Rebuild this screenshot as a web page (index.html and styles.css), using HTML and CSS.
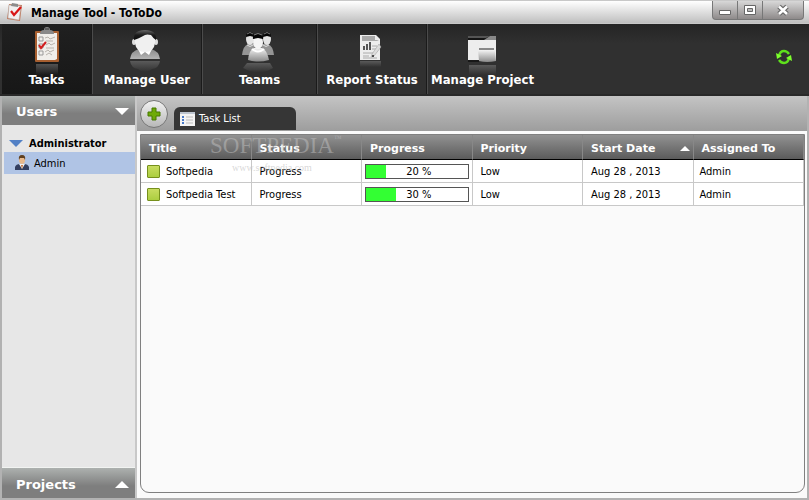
FILE: index.html
```html
<!DOCTYPE html>
<html lang="en">
  <head>
    <meta charset="UTF-8" />
    <meta name="viewport" content="width=device-width, initial-scale=1" />
    <title>Manage Tool - ToToDo</title>
    <link rel="stylesheet" href="styles.css">
  </head>
  <body>
    <div class="window">
      <header class="titlebar">
        <svg class="app-icon" viewBox="0 0 18 20">
          <path d="M3 2L16 3L14 19L1 17Z" fill="#c47a5c" />
          <path d="M3 3L15 4L13 18L2 16Z" fill="#f1efef" stroke="#aaa" stroke-width=".5" />
          <path d="M6 1L12 2V5L5 4Z" fill="#8c8c8c" />
          <path d="M5 9L8 13L15 5" fill="none" stroke="#d91616" stroke-width="2.2" />
        </svg>
        <h1>Manage Tool - ToToDo</h1>
        <div class="window-buttons">
          <button aria-label="Minimize">
            <svg width="14" height="14" viewBox="0 0 14 14"><path d="M1.500 7.500H12.500V11.500H1.500Z" fill="#fff" stroke="#666" /></svg>
          </button>
          <button aria-label="Maximize">
            <svg width="14" height="14" viewBox="0 0 14 14"><path d="M1.500 2.500H12.500V11.500H1.500Z" fill="#fff" stroke="#666" /><path d="M4.500 5.500H9.500V8.500H4.500Z" fill="#bbb" stroke="#666" /></svg>
          </button>
          <button class="close" aria-label="Close">
            <svg width="14" height="14" viewBox="0 0 14 14"><path d="M3 3.500L11 11M11 3.500L3 11" stroke="#666" stroke-width="5" /><path d="M3 3.500L11 11M11 3.500L3 11" stroke="#fff" stroke-width="2.600" /></svg>
          </button>
        </div>
      </header>

      <nav class="toolbar">
        <button class="tool tool-tasks active">
          <svg viewBox="0 0 36 48">
            <defs>
              <linearGradient id="fade" x1="0" y1="0" x2="0" y2="1">
                <stop offset="0" stop-color="#777" stop-opacity=".6" />
                <stop offset="1" stop-color="#777" stop-opacity="0" />
              </linearGradient>
              <linearGradient id="silver" x1="0" y1="0" x2="0" y2="1">
                <stop offset="0" stop-color="#f4f4f4" />
                <stop offset="1" stop-color="#8a8a8a" />
              </linearGradient>
              <linearGradient id="shirt" x1="0" y1="0" x2="0" y2="1">
                <stop offset="0" stop-color="#8a8a8a" />
                <stop offset="1" stop-color="#b4b4b4" />
              </linearGradient>
              <linearGradient id="hair" x1="0" y1="0" x2="0" y2="1">
                <stop offset="0" stop-color="#6a6a6a" />
                <stop offset=".5" stop-color="#1c1c1c" />
                <stop offset="1" stop-color="#0c0c0c" />
              </linearGradient>
            </defs>
            <rect x="6" y="4" width="24" height="31" rx="1" fill="#a75f30" />
            <path d="M8 6H28V32L26 33H8Z" fill="#f0eeea" />
            <path d="M11 7Q11 3 15 3Q15 0 18 0Q21 0 21 3Q25 3 25 7Z" fill="#898989" />
            <path d="M16 2H20" stroke="#333" />
            <path d="M10 10H14V14H10ZM10 17H14V21H10ZM10 24H14V28H10Z" fill="none" stroke="#999" />
            <path d="M16 11L19 10L21 12L26 10M17 14H24M17 18L20 16L22 18L26 16M17 21H25M16 25L19 23L21 25L25 23M17 28L20 26L23 28" fill="none" stroke="#b8b3ac" />
            <path d="M10 18L12 21L17 15" fill="none" stroke="#d12020" stroke-width="2" />
            <rect x="7" y="37" width="22" height="11" fill="url(#fade)" />
          </svg>
          <span>Tasks</span>
        </button>
        <button class="tool">
          <svg viewBox="0 0 36 48">
            <path d="M1 32Q2 24 10 22H22Q30 24 31 32Z" fill="url(#shirt)" />
            <path d="M9 22L12 28L16 25L20 28L23 22Z" fill="#fff" />
            <ellipse cx="5" cy="15" rx="2" ry="3" fill="#ddd" /><ellipse cx="27" cy="15" rx="2" ry="3" fill="#ddd" />
            <path d="M6 11Q7 5 16 5Q25 5 26 11V16Q25 25 16 25Q7 25 6 16Z" fill="#f0f0f0" />
            <path d="M5 13Q4 3 16 3Q28 3 27 13Q24 11 22 8Q18 7 16 8Q9 12 5 13Z" fill="url(#hair)" />
            <path d="M1 34H31Q30 41 23 42Q16 48 9 42Q2 41 1 34Z" fill="url(#fade)" />
          </svg>
          <span>Manage User</span>
        </button>
        <button class="tool tool-teams">
          <svg viewBox="0 0 36 48">
            <path d="M0 28Q1 19 6 17H12L14 28ZM32 28Q31 19 26 17H20L18 28Z" fill="#959595" />
            <path d="M5 18Q8 21 11 18M21 18Q24 21 27 18" fill="none" stroke="#ddd" />
            <ellipse cx="8" cy="12" rx="4" ry="6" fill="#e4e4e4" /><ellipse cx="25" cy="12" rx="4" ry="6" fill="#e4e4e4" />
            <path d="M4 10Q4 5 8 5Q12 5 12 10L8 9ZM21 10Q21 5 25 5Q29 5 29 10L25 9Z" fill="#050505" />
            <path d="M5 7Q8 4 11 7M22 7Q25 4 28 7" fill="none" stroke="#777" />
            <path d="M6 33Q7 23 12 21H20Q25 23 27 33Q16 36 6 33Z" fill="url(#silver)" />
            <path d="M10 22Q16 27 22 22" stroke="#fff" stroke-width="2" fill="none" />
            <ellipse cx="16" cy="15" rx="5" ry="7" fill="#f4f4f4" />
            <path d="M11 12Q10 7 16 7Q22 7 21 12L16 11Z" fill="#050505" />
            <path d="M12 8Q16 5 20 8" fill="none" stroke="#777" />
            <path d="M5 36H28L31 41Q16 50 1 41Z" fill="url(#fade)" />
          </svg>
          <span>Teams</span>
        </button>
        <button class="tool">
          <svg viewBox="0 0 36 48">
            <path d="M6 8H22L26 12V33H6Z" fill="#ededed" />
            <path d="M8 9H21V13H25L23 14H8Z" fill="#aaa" />
            <path d="M10 19V23M13 17V23M16 15V23" stroke="#555" stroke-width="2" />
            <path d="M18 19H23M18 22H23M9 26H20M9 29H15M9 31H23" stroke="#aaa" />
            <path d="M25 17L27 20L20 29L17 30L18 27Z" fill="#ddd" stroke="#999" stroke-width=".5" />
            <circle cx="19" cy="29" r="1" fill="#222" />
            <path d="M6 34H27V40H6Z" fill="url(#fade)" />
          </svg>
          <span>Report Status</span>
        </button>
        <button class="tool">
          <svg viewBox="0 0 36 48">
            <path d="M3 9H31V34H3Z" fill="#ededed" />
            <path d="M3 9H31V13H3Z" fill="#151515" /><path d="M3 9H25L21 11H3Z" fill="#555" />
            <path d="M25 9H31V13H19Z" fill="#888" />
            <path d="M3 33H14V35H3Z" fill="#181818" />
            <path d="M13 23H30L31 34Q22 36 14 34Z" fill="url(#silver)" />
            <path d="M14 22H29" stroke="#888" stroke-width="2" />
            <path d="M4 38H31V48H4Z" fill="url(#fade)" />
          </svg>
          <span>Manage Project</span>
        </button>
        <button class="refresh" aria-label="Refresh">
          <svg width="16" height="16" viewBox="0 0 16 16">
            <path d="M3 7Q4 2 8 2Q11 2 13 5M13 9Q12 14 8 14Q5 14 3 11" fill="none" stroke="#5ee01c" stroke-width="2.400" />
            <path d="M0 4L6 7L1 10Z" fill="#7dff2d" /><path d="M16 12L10 9L15 6Z" fill="#7dff2d" />
          </svg>
        </button>
      </nav>

      <div class="content">
        <aside class="sidebar">
          <button class="section-head">Users <i class="arrow down"></i></button>
          <ul class="tree">
            <li><button class="group"><i class="arrow down blue"></i>Administrator</button></li>
            <li>
              <button class="user">
                <svg width="16" height="16" viewBox="0 0 16 16">
                  <path d="M1 15V12Q2 9 6 9H10Q14 9 15 12V15Z" fill="#343f60" />
                  <path d="M5 9L8 14L11 9Z" fill="#f3f3f3" /><path d="M7 10H9L8 14Z" fill="#bf6830" />
                  <ellipse cx="8" cy="5" rx="3" ry="4" fill="#e9b98c" />
                  <path d="M5 5Q4 0 8 0Q12 0 11 5L10 3H6Z" fill="#604020" />
                </svg>
                Admin
              </button>
            </li>
          </ul>
          <button class="section-head projects">Projects <i class="arrow up"></i></button>
        </aside>

        <main class="main">
          <div class="tabbar">
            <button class="add" aria-label="Add task">
              <svg width="14" height="14" viewBox="0 0 14 14"><path d="M5 1H9V5H13V9H9V13H5V9H1V5H5Z" fill="#6eaa08" stroke="#477900" /></svg>
            </button>
            <button class="tab">
              <svg width="15" height="14" viewBox="0 0 15 14">
                <path d="M0 0H15V14H0Z" fill="#f3f3f3" /><path d="M0 0H15V2H0Z" fill="#bcc4cf" />
                <path d="M2 5H4M2 8H4M2 11H4" stroke="#4779c7" stroke-width="2" />
                <path d="M6 5H13M6 8H13M6 11H13" stroke="#bbb" />
              </svg>
              Task List
            </button>
          </div>
          <div class="panel">
            <table>
              <thead>
                <tr>
                  <th>Title</th>
                  <th>Status</th>
                  <th>Progress</th>
                  <th>Priority</th>
                  <th><div class="sorted">Start Date <i class="arrow up small"></i></div></th>
                  <th>Assigned To</th>
                </tr>
              </thead>
              <tbody>
                <tr>
                  <td><div class="task"><i class="mark"></i>Softpedia</div></td>
                  <td>Progress</td>
                  <td class="progress-cell"><div class="progress"><div class="bar" style="width: 20%"></div><span>20 %</span></div></td>
                  <td>Low</td>
                  <td>Aug 28 , 2013</td>
                  <td>Admin</td>
                </tr>
                <tr>
                  <td><div class="task"><i class="mark"></i>Softpedia Test</div></td>
                  <td>Progress</td>
                  <td class="progress-cell"><div class="progress"><div class="bar" style="width: 30%"></div><span>30 %</span></div></td>
                  <td>Low</td>
                  <td>Aug 28 , 2013</td>
                  <td>Admin</td>
                </tr>
              </tbody>
            </table>
            <div class="watermark">
              <div class="brand">SOFTPEDIA<sup>™</sup></div>
              <div class="site">www.softpedia.com</div>
            </div>
          </div>
        </main>
      </div>
    </div>
  </body>
</html>
```
FILE: styles.css
```css
* {
  box-sizing: border-box;
}

body {
  margin: 0;
  font-family: "DejaVu Sans Condensed", Tahoma, sans-serif;
  font-size: 11px;
  color: #000;
}

button {
  font: inherit;
  color: inherit;
  border: none;
  background: none;
  padding: 0;
  cursor: pointer;
}

svg {
  display: block;
  flex: none;
}

.window {
  display: flex;
  flex-direction: column;
  min-height: 100vh;
  border-bottom: 2px solid #b2b2b2;
}

/* title bar */
.titlebar {
  display: flex;
  align-items: center;
  height: 24px;
  padding-left: 6px;
  border-top: 1px solid #c8c8c8;
  border-bottom: 1px solid #c8c8c8;
  background: linear-gradient(#fff, #bfbfbf);
}

.app-icon {
  width: 18px;
  height: 20px;
}

.titlebar h1 {
  flex: 1;
  margin: 2px 0 0 7px;
  font-size: 12px;
  line-height: 16px;
}

.window-buttons {
  display: flex;
  align-self: flex-start;
  margin-right: 5px;
  border: 1px solid #777;
  border-top: none;
  border-radius: 0 0 4px 4px;
  background: linear-gradient(#d8d8d8, #8e8a8a);
}

.window-buttons button {
  display: flex;
  align-items: center;
  justify-content: center;
  width: 25px;
  height: 18px;
  border-right: 1px solid #777;
}

.window-buttons .close {
  width: 40px;
  border-right: none;
}

/* toolbar */
.toolbar {
  display: flex;
  height: 72px;
  padding-left: 2px;
  border-bottom: 2px solid #292929;
  background: linear-gradient(#252525, #303030 20px);
}

.tool {
  display: flex;
  flex-direction: column;
  align-items: center;
  width: 110px;
  padding-top: 3px;
  border-right: 1px solid #1a1a1a;
  border-left: 1px solid #4b4b4b;
  color: #fff;
  font-size: 13px;
  font-weight: bold;
  white-space: nowrap;
}

.tool:nth-child(5) {
  border-right: none;
}

.tool svg {
  width: 36px;
  height: 48px;
}

.tool span {
  margin-top: -3px;
  line-height: 16px;
}

.tool-tasks {
  width: 90px;
}

.tool-teams {
  width: 115px;
}

.tool.active {
  border-left: none;
  background: linear-gradient(#202020, #171717);
}

.refresh {
  margin: 0 17px 4px auto;
}

/* sidebar */
.content {
  flex: 1;
  display: flex;
  border-right: 2px solid #b2b2b2;
  border-left: 2px solid #b2b2b2;
}

.sidebar {
  display: flex;
  flex-direction: column;
  width: 135px;
  border-right: 2px solid #c8c8c8;
  background: #e7e7e7;
}

.section-head {
  display: flex;
  align-items: center;
  justify-content: space-between;
  height: 29px;
  padding: 2px 6px 0 14px;
  background: linear-gradient(#adb1af, #7e7e7e 60%);
  color: #fff;
  font-family: "DejaVu Sans", Verdana, sans-serif;
  font-size: 13px;
  font-weight: bold;
}

.projects {
  height: 31px;
  border-top: 1px solid #f2f4f2;
}

.arrow {
  border: 7px solid transparent;
}

.arrow.down {
  border-top-color: #fff;
  border-bottom: none;
}

.arrow.up {
  border-bottom-color: #fff;
  border-top: none;
}

.arrow.blue {
  border-top-color: #5381c5;
}

.arrow.small {
  border-width: 5px;
  border-top: none;
}

.tree {
  flex: 1;
  margin: 0;
  padding: 9px 0 0 2px;
  list-style: none;
}

.tree button {
  display: flex;
  align-items: center;
  width: 100%;
  height: 22px;
}

.tree .group {
  height: 18px;
  padding-left: 5px;
  gap: 6px;
  font-size: 11px;
  font-weight: bold;
}

.tree .user {
  padding-left: 10px;
  gap: 4px;
  background: #b0c4e5;
}

/* tabs */
.main {
  flex: 1;
  display: flex;
  flex-direction: column;
  min-width: 0;
  background: #fafafa;
}

.tabbar {
  display: flex;
  align-items: center;
  height: 35px;
  padding-left: 3px;
  background: linear-gradient(#c4c4c4, #9d9d9d);
}

.add {
  display: flex;
  align-items: center;
  justify-content: center;
  width: 28px;
  height: 28px;
  border: 1px solid #777;
  border-radius: 50%;
  background: linear-gradient(#f2f2f2, #b8b8b8);
}

.tab {
  display: flex;
  align-items: center;
  align-self: flex-end;
  gap: 4px;
  width: 122px;
  height: 23px;
  margin-bottom: 1px;
  margin-left: 6px;
  padding-left: 6px;
  border-radius: 6px 6px 0 0;
  background: #363636;
  color: #fff;
}

/* task table */
.panel {
  position: relative;
  flex: 1;
  margin: 3px 2px 5px 3px;
  overflow: hidden;
  border: 1px solid #808080;
  border-radius: 0 0 9px 9px;
}

table {
  width: 100%;
  table-layout: fixed;
  border-collapse: separate;
  border-spacing: 0;
}

th {
  height: 25px;
  padding: 3px 0 0 8px;
  border-right: 1px solid #888;
  border-bottom: 1px solid #000;
  background: linear-gradient(#929292, #5b5b5b);
  color: #fff;
  font-family: "DejaVu Sans", Verdana, sans-serif;
  font-size: 11px;
  text-align: left;
}

.sorted {
  display: flex;
  align-items: center;
  justify-content: space-between;
  padding-right: 3px;
}

td {
  height: 23px;
  padding: 0 0 0 8px;
  border-right: 1px solid #c8c8c8;
  border-bottom: 1px solid #c8c8c8;
  background: #fff;
}

td:last-child {
  padding-left: 6px;
}

.task {
  display: flex;
  align-items: center;
  gap: 6px;
  margin-left: -2px;
}

.mark {
  width: 13px;
  height: 13px;
  border: 1px solid #76901c;
  border-radius: 1px;
  background: linear-gradient(#c8dc60, #acce40);
}

td.progress-cell {
  padding: 0 3px;
}

.progress {
  position: relative;
  height: 15px;
  border: 1px solid #555;
  text-align: center;
}

.bar {
  height: 100%;
  background: #3f3;
}

.progress span {
  position: absolute;
  inset: 0;
  padding-left: 4px;
  line-height: 14px;
}

/* watermark over the table */
.watermark {
  position: absolute;
  top: 0;
  left: 69px;
  pointer-events: none;
  font-family: "Liberation Serif", serif;
}

.brand {
  color: rgba(200, 200, 200, 0.45);
  font-size: 23px;
  line-height: 21px;
}

.brand sup {
  font-size: 8px;
  line-height: 8px;
  vertical-align: top;
}

.site {
  margin: 5px 0 0 22px;
  color: rgba(190, 190, 190, 0.6);
  font-size: 10px;
  line-height: 14px;
}
```
